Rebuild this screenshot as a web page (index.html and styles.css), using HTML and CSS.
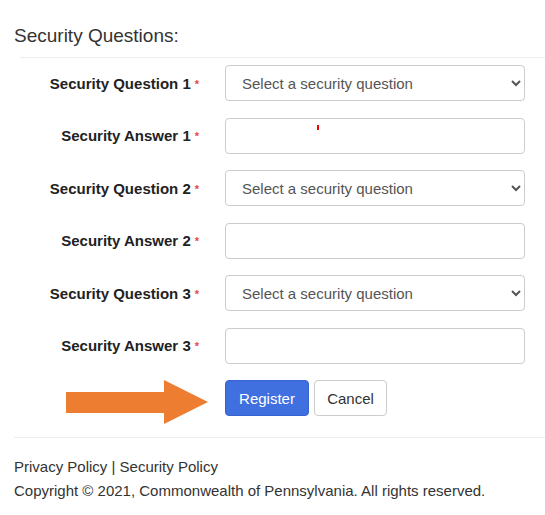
FILE: index.html
```html
<!DOCTYPE html>
<html>
<head>
<meta charset="utf-8">
<link rel="stylesheet" href="styles.css">
</head>
<body>
<div class="page">
  <h2 class="title">Security Questions:</h2>
  <hr class="rule">
  <form class="form">
    <label class="lbl">Security Question 1<span class="req">*</span></label>
    <select class="ctl"><option>Select a security question</option></select>
    <label class="lbl">Security Answer 1<span class="req">*</span></label>
    <div class="field"><input class="ctl" type="text"><span class="mark"></span></div>
    <label class="lbl">Security Question 2<span class="req">*</span></label>
    <select class="ctl"><option>Select a security question</option></select>
    <label class="lbl">Security Answer 2<span class="req">*</span></label>
    <input class="ctl" type="text">
    <label class="lbl">Security Question 3<span class="req">*</span></label>
    <select class="ctl"><option>Select a security question</option></select>
    <label class="lbl">Security Answer 3<span class="req">*</span></label>
    <input class="ctl" type="text">
    <div class="arrow-cell">
      <svg width="142" height="44" viewBox="0 0 142 44"><polygon points="0,12 98,12 98,0 142,22 98,44 98,33 0,33" fill="#ed7d31"/></svg>
    </div>
    <div class="actions">
      <button type="button" class="btn primary">Register</button>
      <button type="button" class="btn">Cancel</button>
    </div>
  </form>
  <hr class="foot-rule">
  <footer class="footer">
    <div>Privacy Policy | Security Policy</div>
    <div>Copyright © 2021, Commonwealth of Pennsylvania. All rights reserved.</div>
  </footer>
</div>
</body>
</html>
```
FILE: styles.css
```css
html, body { margin: 0; padding: 0; background: #fff; }
body { font-family: "Liberation Sans", Arial, sans-serif; color: #333; }
.page { width: 545px; }
.title { margin: 0; padding: 24px 0 0 14px; font-size: 19px; font-weight: normal; line-height: 23px; color: #333; }
.rule { margin: 10px 0 7px 20px; border: 0; border-top: 1px solid #eee; height: 0; }
.form { display: grid; grid-template-columns: 190px 300px; column-gap: 15px; row-gap: 16.5px; margin-left: 20px; align-items: center; }
.lbl { text-align: right; padding-right: 11px; font-weight: bold; font-size: 15px; color: #222; white-space: nowrap; }
.req { color: #e8474c; font-size: 11px; margin-left: 4px; vertical-align: 1px; }
.ctl { box-sizing: border-box; width: 300px; height: 36px; border: 1px solid #ccc; border-radius: 4px; font-family: "Liberation Sans", Arial, sans-serif; font-size: 15px; color: #555; background: #fff; padding: 0 10px 0 16px; margin: 0; }
select.ctl { padding-left: 12px; }
.field { position: relative; height: 36px; }
.mark { position: absolute; left: 92px; top: 7px; width: 2px; height: 5px; background: #e00; }
.arrow-cell { justify-self: end; align-self: start; margin-right: 2px; display: flex; }
.actions { display: flex; gap: 5px; align-self: start; }
.btn { height: 36px; border: 1px solid #ccc; border-radius: 4px; background: #fff; color: #333; font-family: "Liberation Sans", Arial, sans-serif; font-size: 15px; padding: 0 12px; }
.btn.primary { background: #4070e0; border-color: #3563cf; color: #fff; width: 84px; }
.btn:not(.primary) { width: 73px; }
.foot-rule { margin: 13px 0 0 14px; border: 0; border-top: 1px solid #eee; height: 0; }
.footer { padding: 17px 0 0 14px; font-size: 15px; line-height: 24px; color: #333; }
```
